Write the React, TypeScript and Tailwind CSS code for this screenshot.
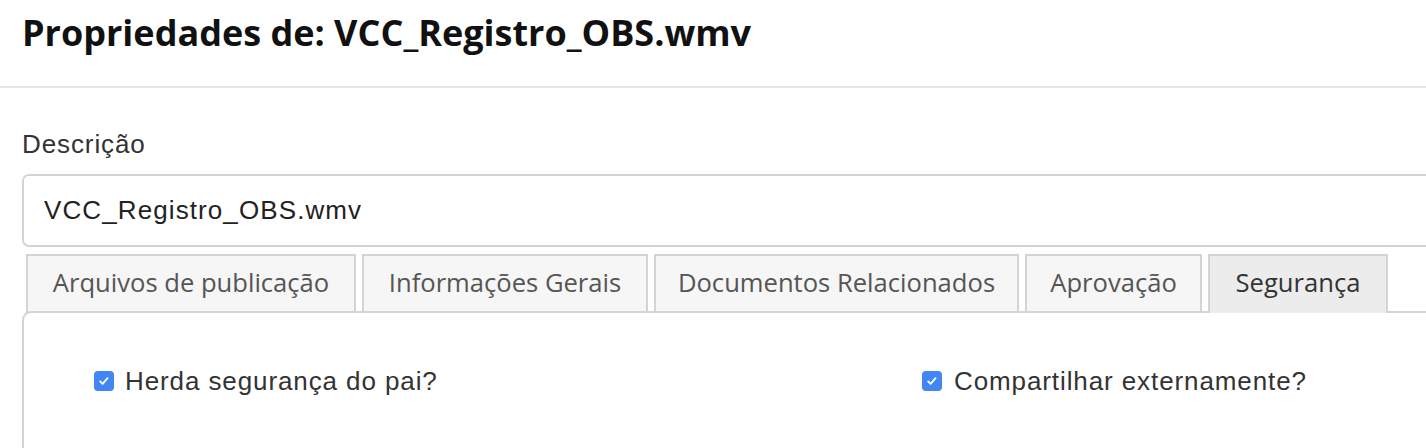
import React from 'react';

const tabs = [
  { label: 'Arquivos de publicação', w: 'w-[330px]' },
  { label: 'Informações Gerais', w: 'w-[286px]' },
  { label: 'Documentos Relacionados', w: 'w-[365px]' },
  { label: 'Aprovação', w: 'w-[177px]' },
  { label: 'Segurança', w: 'w-[180px]', active: true },
];

function Check() {
  return (
    <span className="flex h-[20px] w-[20px] shrink-0 items-center justify-center rounded-[4px] bg-[#4285f4]">
      <svg viewBox="0 0 20 20" className="h-[14px] w-[14px]" fill="none">
        <path d="M4.5 10.5l3.5 3.5 7-8" stroke="white" strokeWidth="2.6" strokeLinecap="round" strokeLinejoin="round" />
      </svg>
    </span>
  );
}

export default function App() {
  return (
    <div className="h-[448px] w-[1426px] overflow-hidden bg-white">
      {/* Cabeçalho */}
      <div className="h-[86px] pl-[22px] pt-[8px]">
        <h1 className="font-['Open_Sans',sans-serif] text-[36px] font-bold leading-[50px] tracking-[0px] text-[#111]">
          Propriedades de: VCC_Registro_OBS.wmv
        </h1>
      </div>
      <div className="h-[2px] bg-[#e6e6e6]" />

      <div className="w-[1500px] pl-[22px]">
        {/* Descrição */}
        <label className="mt-[41px] block font-['Liberation_Sans',Arial,sans-serif] text-[26px] leading-[30px] tracking-[0.9px] text-[#333]">
          Descrição
        </label>
        <div className="mt-[15px] flex h-[73px] items-center rounded-[7px] border-2 border-[#d4d4d4] px-[20px] font-['Liberation_Sans',Arial,sans-serif] text-[26px] tracking-[1.1px] text-[#222]">
          VCC_Registro_OBS.wmv
        </div>

        {/* Abas */}
        <div className="mt-[7px] flex gap-[6px] pl-[4px]">
          {tabs.map((t) => (
            <div
              key={t.label}
              className={
                t.active
                  ? `relative z-10 flex h-[59px] ${t.w} items-center justify-center border-2 border-b-0 border-[#d4d4d4] bg-[#ececec] font-['Open_Sans',sans-serif] text-[25.6px] text-[#333]`
                  : `flex h-[59px] ${t.w} items-center justify-center border-2 border-b-0 border-[#d4d4d4] bg-[#f6f6f6] font-['Open_Sans',sans-serif] text-[25.6px] text-[#555]`
              }
            >
              <span className="-mt-[2px]">{t.label}</span>
            </div>
          ))}
        </div>

        {/* Painel */}
        <div className="relative -mt-[2px] h-[200px] rounded-tl-[9px] border-2 border-[#d4d4d4] bg-white pl-[70px] pt-[54px]">
          <div className="grid grid-cols-[828px_1fr] font-['Liberation_Sans',Arial,sans-serif] text-[26px] tracking-[0.9px] text-[#333]">
            <div className="flex h-[28px] items-center gap-[11px]">
              <Check />
              <span>Herda segurança do pai?</span>
            </div>
            <div className="flex h-[28px] items-center gap-[12px]">
              <Check />
              <span>Compartilhar externamente?</span>
            </div>
          </div>
        </div>
      </div>
    </div>
  );
}
